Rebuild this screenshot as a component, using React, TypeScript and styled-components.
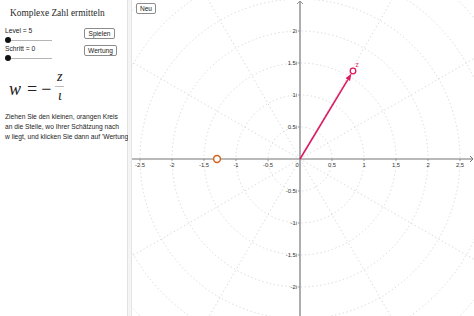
import React from "react";
import styled, { createGlobalStyle } from "styled-components";

const Global = createGlobalStyle`
  html, body { margin: 0; padding: 0; background: #ffffff; }
  body { width: 474px; height: 316px; overflow: hidden; font-family: "Liberation Sans", Arial, sans-serif; }
`;

const Page = styled.div`
  display: flex;
  width: 474px;
  height: 316px;
  background: #fff;
`;

const LeftPanel = styled.div`
  width: 128px;
  flex: none;
  display: flex;
  flex-direction: column;
  border-right: 1px solid #e2e2e2;
  box-sizing: border-box;
`;

const Divider = styled.div`
  width: 4px;
  flex: none;
  background: #f5f5f5;
  border-right: 1px solid #e4e4e4;
  box-sizing: border-box;
`;

const Title = styled.div`
  margin-top: 7px;
  padding-left: 10px;
  height: 12px;
  font-family: "Liberation Serif", "Times New Roman", serif;
  font-size: 9.4px;
  line-height: 12px;
  color: #2a2a2a;
  white-space: nowrap;
`;

const Controls = styled.div`
  margin-top: 8px;
  display: grid;
  grid-template-columns: 80px 40px;
  padding-left: 4px;
`;

const SliderCol = styled.div`
  display: flex;
  flex-direction: column;
`;

const SliderLabel = styled.div`
  height: 8px;
  font-size: 6.7px;
  line-height: 8px;
  color: #222;
  padding-left: 1px;
  white-space: nowrap;
`;

const SliderTrack = styled.div`
  position: relative;
  height: 10px;
  width: 48px;
  &::before {
    content: "";
    position: absolute;
    left: 1px;
    right: 0;
    top: 4.5px;
    height: 1px;
    background: #b4b4b4;
  }
`;

const Knob = styled.div<{ $pos: number }>`
  position: absolute;
  top: 2px;
  left: ${(p) => p.$pos}px;
  width: 6px;
  height: 6px;
  border-radius: 50%;
  background: #111;
`;

const ButtonCol = styled.div`
  display: flex;
  flex-direction: column;
  align-items: flex-start;
  gap: 6px;
  padding-top: 1px;
`;

const Btn = styled.div<{ $w: number }>`
  width: ${(p) => p.$w}px;
  height: 11px;
  box-sizing: border-box;
  border: 1px solid #8c8c8c;
  border-radius: 2px;
  background: #fff;
  font-size: 6.6px;
  line-height: 9px;
  text-align: center;
  color: #222;
  white-space: nowrap;
`;

const Formula = styled.div`
  margin-top: 4px;
  padding-left: 9px;
  height: 44px;
  display: flex;
  align-items: center;
  font-family: "Liberation Serif", "Times New Roman", serif;
  color: #222;
`;

const MathW = styled.span`
  font-style: italic;
  font-size: 18px;
  margin-right: 6px;
`;

const MathOp = styled.span`
  font-size: 18px;
  margin-right: 4px;
`;

const Frac = styled.span`
  display: inline-flex;
  flex-direction: column;
  align-items: center;
  font-style: italic;
  font-size: 14px;
  line-height: 13px;
  margin-top: -6px;
`;

const FracBar = styled.span`
  width: 9px;
  height: 0.5px;
  background: #bbb;
  margin: 3px 0 3px 0;
`;

const Para = styled.div`
  margin-top: 1px;
  padding-left: 5px;
  font-size: 6.67px;
  line-height: 10px;
  color: #222;
  white-space: nowrap;
`;

const Graphics = styled.div`
  position: relative;
  flex: 1;
  height: 316px;
  overflow: hidden;
`;

const NeuBtn = styled.div`
  position: absolute;
  left: 4px;
  top: 3px;
  width: 20px;
  height: 11px;
  box-sizing: border-box;
  border: 1px solid #8c8c8c;
  border-radius: 2px;
  background: #fff;
  font-size: 6.6px;
  line-height: 9px;
  text-align: center;
  color: #222;
`;

const W = 342;
const H = 316;
const OX = 168;
const OY = 159;
const U = 64;

function Canvas() {
  const grid = "#d3d3d3";
  const circles = [];
  for (let k = 1; k <= 8; k++) {
    circles.push(
      <circle key={"c" + k} cx={OX} cy={OY} r={32 * k} fill="none" stroke={grid} strokeWidth={0.9} strokeDasharray="1.3 2.6" />
    );
  }
  const rays = [];
  for (let a = 0; a < 360; a += 30) {
    if (a % 90 === 0) continue;
    const r = (a * Math.PI) / 180;
    rays.push(
      <line key={"r" + a} x1={OX} y1={OY} x2={OX + 400 * Math.cos(r)} y2={OY - 400 * Math.sin(r)} stroke={grid} strokeWidth={0.9} strokeDasharray="1.3 2.6" />
    );
  }
  const xs = [-2.5, -2, -1.5, -1, -0.5, 0.5, 1, 1.5, 2, 2.5];
  const ys = [2, 1.5, 1, 0.5, -0.5, -1, -1.5, -2];
  const tip = { x: 221, y: 71 };
  const dx = tip.x - OX;
  const dy = tip.y - OY;
  const len = Math.hypot(dx, dy);
  const ux = dx / len;
  const uy = dy / len;
  const tx = tip.x - ux * 3;
  const ty = tip.y - uy * 3;
  const bx = tx - ux * 7;
  const by = ty - uy * 7;
  const px = -uy;
  const py = ux;
  const col = "#dc1a62";
  return (
    <svg width={W} height={H} style={{ display: "block" }}>
      {circles}
      {rays}
      <line x1={0} y1={OY} x2={W - 1} y2={OY} stroke="#757575" strokeWidth={1.1} />
      <polyline points={`${W - 4},${OY - 3} ${W - 1},${OY} ${W - 4},${OY + 3}`} fill="none" stroke="#757575" strokeWidth={1} />
      <line x1={OX} y1={H} x2={OX} y2={1} stroke="#929292" strokeWidth={1.5} />
      <polyline points={`${OX - 3},${4} ${OX},${1} ${OX + 3},${4}`} fill="none" stroke="#929292" strokeWidth={1} />
      {xs.map((v) => (
        <g key={"x" + v}>
          <line x1={OX + v * U} y1={OY} x2={OX + v * U} y2={OY + 2} stroke="#888" strokeWidth={0.7} />
          <text x={OX + v * U} y={OY + 7.5} fontSize={5.8} fill="#333" textAnchor="middle" fontFamily="Liberation Sans, Arial, sans-serif">
            {String(v)}
          </text>
        </g>
      ))}
      <text x={OX - 3} y={OY + 7.5} fontSize={5.8} fill="#333" textAnchor="middle" fontFamily="Liberation Sans, Arial, sans-serif">0</text>
      {ys.map((v) => (
        <g key={"y" + v}>
          <line x1={OX - 2} y1={OY - v * U} x2={OX} y2={OY - v * U} stroke="#888" strokeWidth={0.7} />
          <text x={OX - 3} y={OY - v * U + 2} fontSize={5.8} fill="#333" textAnchor="end" fontFamily="Liberation Sans, Arial, sans-serif">
            {String(v) + "i"}
          </text>
        </g>
      ))}
      <line x1={OX} y1={OY} x2={bx} y2={by} stroke={col} strokeWidth={1.6} />
      <polygon points={`${tx},${ty} ${bx + px * 2.6},${by + py * 2.6} ${bx - px * 2.6},${by - py * 2.6}`} fill={col} />
      <circle cx={tip.x} cy={tip.y} r={2.8} fill="#fff" stroke={col} strokeWidth={1.3} />
      <text x={tip.x + 2.5} y={tip.y - 4} fontSize={6.5} fill={col} fontFamily="Liberation Sans, Arial, sans-serif">z</text>
      <circle cx={85} cy={OY} r={3.4} fill="#fff" stroke="#d4651f" strokeWidth={1.5} />
    </svg>
  );
}

export default function App() {
  return (
    <>
      <Global />
      <Page>
        <LeftPanel>
          <Title>Komplexe Zahl ermitteln</Title>
          <Controls>
            <SliderCol>
              <SliderLabel>Level = 5</SliderLabel>
              <SliderTrack>
                <Knob $pos={1} />
              </SliderTrack>
              <SliderLabel>Schritt = 0</SliderLabel>
              <SliderTrack>
                <Knob $pos={1} />
              </SliderTrack>
            </SliderCol>
            <ButtonCol>
              <Btn $w={31}>Spielen</Btn>
              <Btn $w={33}>Wertung</Btn>
            </ButtonCol>
          </Controls>
          <Formula>
            <MathW>w</MathW>
            <MathOp>=</MathOp>
            <MathOp>−</MathOp>
            <Frac>
              <span>z</span>
              <FracBar />
              <span>ι</span>
            </Frac>
          </Formula>
          <Para>
            Ziehen Sie den kleinen, orangen Kreis
            <br />
            an die Stelle, wo Ihrer Schätzung nach
            <br />
            w liegt, und klicken Sie dann auf 'Wertung
          </Para>
        </LeftPanel>
        <Divider />
        <Graphics>
          <Canvas />
          <NeuBtn>Neu</NeuBtn>
        </Graphics>
      </Page>
    </>
  );
}
